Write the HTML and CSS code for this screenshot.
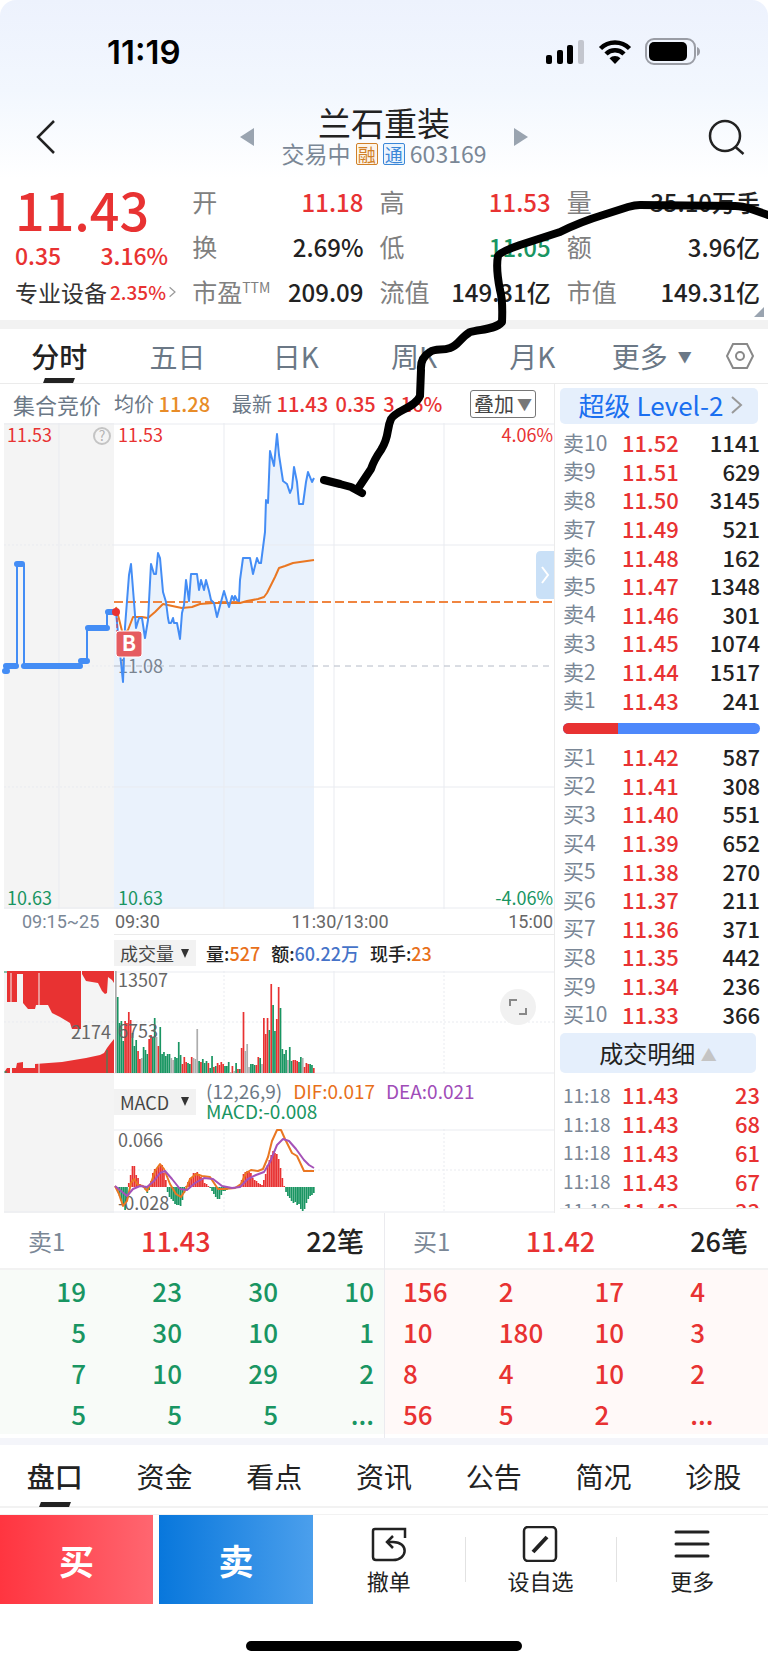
FILE: index.html
```html
<!DOCTYPE html>
<html lang="zh-CN">
<head>
    <meta charset="UTF-8">
    <meta name="viewport" content="width=device-width, initial-scale=1.0">
    <title>兰石重装 603169</title>
    <link rel="stylesheet" href="styles.css">
</head>
<body>
    <header>
        <div class="status-bar">
            <span class="clock">11:19</span>
            <div class="status-icons">
                <svg width="40" height="26" viewBox="0 0 40 26">
                    <rect x="1" y="16" width="6" height="9" rx="2"/>
                    <rect x="12" y="11" width="6" height="14" rx="2"/>
                    <rect x="22" y="6" width="6" height="19" rx="2"/>
                    <rect x="33" y="1" width="6" height="24" rx="2" fill="#c3c6ce"/>
                </svg>
                <svg width="34" height="26" viewBox="0 0 34 26">
                    <path d="M2.500 9.500a20.500 20.500 0 0 1 29 0M8 15a12.700 12.700 0 0 1 18 0" fill="none" stroke="#000" stroke-width="4.500"/>
                    <path d="M17 25l-5.500-5.700a7.800 7.800 0 0 1 11 0z"/>
                </svg>
                <svg width="56" height="28" viewBox="0 0 56 28">
                    <rect x="1" y="1" width="49" height="25" rx="8" fill="none" stroke="#9a9da5" stroke-width="2"/>
                    <rect x="4" y="4" width="38" height="19" rx="5"/>
                    <path d="M52 9c4 1 4 8 0 9z" fill="#9a9da5"/>
                </svg>
            </div>
        </div>
        <nav class="title-bar">
            <button class="icon-button" aria-label="返回">
                <svg width="24" height="36" viewBox="0 0 24 36"><path d="M20 2L4 18l16 16" fill="none" stroke="#222" stroke-width="2.500"/></svg>
            </button>
            <button class="icon-button" aria-label="上一只">
                <svg width="14" height="18" viewBox="0 0 14 18"><path d="M14 0v18L0 9z" fill="#9aa4b0"/></svg>
            </button>
            <div class="stock-title">
                <h1>兰石重装</h1>
                <p>交易中 <span class="badge badge-rong">融</span><span class="badge badge-tong">通</span> 603169</p>
            </div>
            <button class="icon-button" aria-label="下一只">
                <svg width="14" height="18" viewBox="0 0 14 18"><path d="M0 0v18l14-9z" fill="#9aa4b0"/></svg>
            </button>
            <button class="icon-button" aria-label="搜索">
                <svg width="38" height="38" viewBox="0 0 38 38"><g fill="none" stroke="#222" stroke-width="2.500"><circle cx="18" cy="18" r="15"/><path d="M28.500 29l8 7"/></g></svg>
            </button>
        </nav>
    </header>

    <main>
        <section class="quote">
            <div class="quote-main">
                <strong class="price">11.43</strong>
                <div class="change"><span>0.35</span><span>3.16%</span></div>
                <a class="sector" href="#">专业设备<b>2.35%</b>
                    <svg width="12" height="20" viewBox="0 0 12 20"><path d="M1 2l9 8-9 8" fill="none" stroke="#999" stroke-width="2"/></svg>
                </a>
            </div>
            <dl class="quote-col">
                <div><dt>开</dt><dd class="up">11.18</dd></div>
                <div><dt>换</dt><dd>2.69%</dd></div>
                <div><dt>市盈<sup>TTM</sup></dt><dd>209.09</dd></div>
            </dl>
            <dl class="quote-col">
                <div><dt>高</dt><dd class="up">11.53</dd></div>
                <div><dt>低</dt><dd class="down">11.05</dd></div>
                <div><dt>流值</dt><dd>149.31亿</dd></div>
            </dl>
            <dl class="quote-col">
                <div><dt>量</dt><dd>35.10万手</dd></div>
                <div><dt>额</dt><dd>3.96亿</dd></div>
                <div><dt>市值</dt><dd>149.31亿</dd></div>
            </dl>
        </section>

        <nav class="period-tabs">
            <a href="#" class="active">分时</a>
            <a href="#">五日</a>
            <a href="#">日K</a>
            <a href="#">周K</a>
            <a href="#">月K</a>
            <button>更多 <span class="caret">▼</span></button>
            <button aria-label="设置">
                <svg width="30" height="28" viewBox="0 0 30 28"><g fill="none" stroke="#888" stroke-width="2"><path d="M8 2h14l6 12-6 12H8L2 14z"/><circle cx="15" cy="14" r="4"/></g></svg>
            </button>
        </nav>

        <div class="trade">
            <section class="charts">
                <div class="chart-info">
                    <span class="auction">集合竞价</span>
                    <span>均价 <b class="avg">11.28</b></span>
                    <span class="latest">最新 <b class="up">11.43</b> <b class="up">0.35</b> <b class="up">3.16%</b></span>
                    <button class="overlay-button">叠加<span>▼</span></button>
                </div>

                <svg class="chart" viewBox="0 0 554 486">
                    <rect x="4" y="0" width="110" height="486" fill="#f4f4f4"/>
                    <path class="area" id="priceArea"/>
                    <path class="grid" d="M4 1h550M59 0v486M224 0v486M334 0v486M444 0v486M114 122h440M114 364h440M4 485h550"/>
                    <path class="grid dotted" d="M4 122h110M4 364h110M4 243h110"/>
                    <path d="M114 243h440" stroke="#b4bac6" stroke-dasharray="6 5"/>
                    <path d="M114 179h440" stroke="#f08540" stroke-width="2" stroke-dasharray="9 4"/>
                    <text class="axis muted" x="118" y="250">11.08</text>
                    <path class="auction-line" d="M17 243V141M24 141v102M81 243v-5M87 238v-33M107 205v-16"/>
                    <path class="auction-step" d="M5 248h2M6 243h10M17 141h5M24 243h56M81 238h6M88 205h19M108 189h6"/>
                    <path class="line orange" id="avgLine"/>
                    <path class="line blue" id="priceLine"/>
                    <path d="M117 189v22" stroke="#e83232" stroke-dasharray="4 2"/>
                    <circle cx="116" cy="189" r="4" fill="#e83232"/>
                    <rect x="116" y="208" width="26" height="26" rx="3" fill="#e55c61" stroke="#fff"/>
                    <text class="buy-mark" x="129" y="228">B</text>
                    <circle cx="102" cy="13" r="8" fill="none" stroke="#c4c4c4" stroke-width="2"/>
                    <text class="help" x="102" y="18">?</text>
                    <text class="axis up" x="7" y="19">11.53</text>
                    <text class="axis up" x="118" y="19">11.53</text>
                    <text class="axis up end" x="553" y="19">4.06%</text>
                    <text class="axis down" x="7" y="482">10.63</text>
                    <text class="axis down" x="118" y="482">10.63</text>
                    <text class="axis down end" x="553" y="482">-4.06%</text>
                    <path d="M554 128h-13q-5 0-5 5v38q0 5 5 5h13z" fill="#c9e0f7"/>
                    <path d="M542 144l6 8-6 8" fill="none" stroke="#fff" stroke-width="2"/>
                </svg>
                <div class="time-axis">
                    <span class="pre-open">09:15~25</span>
                    <span>09:30</span>
                    <span class="mid">11:30/13:00</span>
                    <span>15:00</span>
                </div>

                <div class="indicator volume-head">
                    <select aria-label="指标一"><option>成交量</option></select>
                    <p><b>量:<span class="orange-text">527</span></b><b>额:<span class="blue-text">60.22万</span></b><b>现手:<span class="orange-text">23</span></b></p>
                </div>
                <svg class="chart" viewBox="0 0 554 103">
                    <rect x="4" y="0" width="110" height="103" fill="#f4f4f4"/>
                    <path class="grid" d="M4 1h550M4 102h550M334 0v102"/>
                    <path class="grid dotted" d="M4 51h550M224 0v102M444 0v102"/>
                    <path d="M7 0v31h10V3h6v29l5 6h7l1-4h12l4 8 8 4 10 6 2 6h9V0zM82 0v3l4 7 12 2 4 8 3 3 2-1 1-16 4 3 2 3V0z" fill="#e83232"/>
                    <path d="M5 102v-2l2-3h3v5zM12 102v-5h4l1-5 6-1v6h12v-4l27-2 24-4 14-3 4-2 3-5 3-4 4-5v34z" fill="#e83232"/>
                    <path d="M11 2v100M39 2v100" stroke="#f4f4f4"/>
                    <path d="M4 1h3M4 101h3M107 79v23" stroke="#199562"/>
                    <g id="volumeBars"></g>
                    <text class="axis gray" x="118" y="16">13507</text>
                    <text class="axis gray" x="118" y="67">6753</text>
                    <text class="axis gray end" x="111" y="68">2174</text>
                    <circle cx="518" cy="36" r="18" fill="#f1f1f1"/>
                    <path d="M510 35v-6h7M526 37v6h-7" fill="none" stroke="#888" stroke-width="2"/>
                </svg>

                <div class="indicator macd-head">
                    <select aria-label="指标二"><option>MACD</option></select>
                    <p><span class="slate">(12,26,9)</span><span class="orange-text">DIF:0.017</span><span class="purple-text">DEA:0.021</span><span class="down">MACD:-0.008</span></p>
                </div>
                <svg class="chart" viewBox="0 0 554 84">
                    <rect x="4" y="0" width="110" height="84" fill="#f4f4f4"/>
                    <path class="grid" d="M114 1h440M4 83h550M334 0v84"/>
                    <path class="grid dotted" d="M114 41h440M224 0v84M444 0v84"/>
                    <g id="macdBars"></g>
                    <text class="axis gray" x="118" y="18">0.066</text>
                    <text class="axis gray" x="118" y="81">-0.028</text>
                    <path class="line orange" id="difLine"/>
                    <path class="line purple" id="deaLine"/>
                </svg>
            </section>

            <aside class="book">
                <a class="level2" href="#">超级 Level-2
                    <svg width="12" height="20" viewBox="0 0 12 20"><path d="M1 2l9 8-9 8" fill="none" stroke="#999" stroke-width="2"/></svg>
                </a>
                <table class="depth">
                    <tr><th>卖10</th><td>11.52</td><td>1141</td></tr>
                    <tr><th>卖9</th><td>11.51</td><td>629</td></tr>
                    <tr><th>卖8</th><td>11.50</td><td>3145</td></tr>
                    <tr><th>卖7</th><td>11.49</td><td>521</td></tr>
                    <tr><th>卖6</th><td>11.48</td><td>162</td></tr>
                    <tr><th>卖5</th><td>11.47</td><td>1348</td></tr>
                    <tr><th>卖4</th><td>11.46</td><td>301</td></tr>
                    <tr><th>卖3</th><td>11.45</td><td>1074</td></tr>
                    <tr><th>卖2</th><td>11.44</td><td>1517</td></tr>
                    <tr><th>卖1</th><td>11.43</td><td>241</td></tr>
                </table>
                <div class="ratio"><div class="ratio-buy" style="width: 28%"></div></div>
                <table class="depth">
                    <tr><th>买1</th><td>11.42</td><td>587</td></tr>
                    <tr><th>买2</th><td>11.41</td><td>308</td></tr>
                    <tr><th>买3</th><td>11.40</td><td>551</td></tr>
                    <tr><th>买4</th><td>11.39</td><td>652</td></tr>
                    <tr><th>买5</th><td>11.38</td><td>270</td></tr>
                    <tr><th>买6</th><td>11.37</td><td>211</td></tr>
                    <tr><th>买7</th><td>11.36</td><td>371</td></tr>
                    <tr><th>买8</th><td>11.35</td><td>442</td></tr>
                    <tr><th>买9</th><td>11.34</td><td>236</td></tr>
                    <tr><th>买10</th><td>11.33</td><td>366</td></tr>
                </table>
                <button class="detail-button">成交明细 <span>▲</span></button>
                <div class="ticks">
                    <table class="depth">
                        <tr><th>11:18</th><td>11.43</td><td>23</td></tr>
                        <tr><th>11:18</th><td>11.43</td><td>68</td></tr>
                        <tr><th>11:18</th><td>11.43</td><td>61</td></tr>
                        <tr><th>11:18</th><td>11.43</td><td>67</td></tr>
                        <tr><th>11:18</th><td>11.43</td><td>33</td></tr>
                    </table>
                </div>
            </aside>
        </div>

        <section class="queues">
            <div class="queue sell">
                <div class="queue-head"><span>卖1</span><b class="up">11.43</b><b>22笔</b></div>
                <table>
                    <tr><td>19</td><td>23</td><td>30</td><td>10</td></tr>
                    <tr><td>5</td><td>30</td><td>10</td><td>1</td></tr>
                    <tr><td>7</td><td>10</td><td>29</td><td>2</td></tr>
                    <tr><td>5</td><td>5</td><td>5</td><td>...</td></tr>
                </table>
            </div>
            <div class="queue buy">
                <div class="queue-head"><span>买1</span><b class="up">11.42</b><b>26笔</b></div>
                <table>
                    <tr><td>156</td><td>2</td><td>17</td><td>4</td></tr>
                    <tr><td>10</td><td>180</td><td>10</td><td>3</td></tr>
                    <tr><td>8</td><td>4</td><td>10</td><td>2</td></tr>
                    <tr><td>56</td><td>5</td><td>2</td><td>...</td></tr>
                </table>
            </div>
        </section>

        <nav class="info-tabs">
            <a href="#" class="active">盘口</a>
            <a href="#">资金</a>
            <a href="#">看点</a>
            <a href="#">资讯</a>
            <a href="#">公告</a>
            <a href="#">简况</a>
            <a href="#">诊股</a>
        </nav>
    </main>

    <footer>
        <div class="actions">
            <button class="buy-button">买</button>
            <button class="sell-button">卖</button>
            <div class="tools">
                <button>
                    <svg width="36" height="36" viewBox="0 0 36 36"><g fill="none" stroke="#222" stroke-width="2.500"><path d="M34 12V3H4q-2 0-2 2v26q0 3 3 3h17c15 0 16-18 0-18h-6"/><path d="M22 10l-6 6 6 6"/></g></svg>
                    <span>撤单</span>
                </button>
                <button>
                    <svg width="36" height="36" viewBox="0 0 36 36"><g fill="none" stroke="#222" stroke-width="2.500"><rect x="2" y="1" width="32" height="34" rx="4"/><path d="M11 26l14-15" stroke-width="4"/></g></svg>
                    <span>设自选</span>
                </button>
                <button>
                    <svg width="36" height="36" viewBox="0 0 36 36"><path d="M2 6h32M2 18h32M2 30h32" stroke="#222" stroke-width="3" stroke-linecap="round"/></svg>
                    <span>更多</span>
                </button>
            </div>
        </div>
        <div class="home-indicator"></div>
    </footer>

    <svg class="doodle" viewBox="0 0 768 520">
        <path d="M768 215L751 209Q742 206 735 206L640 205Q635 205 628 207L603 215Q580 222 560 232L520 245Q500 252 498 256C496 266 498 280 500 290Q503 300 502 322C495 330 480 329 470 332C460 338 458 346 450 348C442 351 436 348 430 352Q420 358 421 370L420 396C415 408 396 410 391 419C386 430 390 436 381 450Q374 460 371 469L359 487"/>
        <path d="M325 480L336 483L351 487L362 493M324 480L340 484"/>
    </svg>

    <script src="script.js"></script>
</body>
</html>
```

FILE: styles.css
```css
* {
    margin: 0;
    padding: 0;
    box-sizing: border-box;
}

body {
    position: relative;
    background: #fff;
    color: #222;
    font-family: 'Noto Sans CJK SC', 'Noto Sans', sans-serif;
    font-size: 24px;
    line-height: 1;
}

button, select {
    background: none;
    border: none;
    color: inherit;
    font: inherit;
    cursor: pointer;
}

a {
    color: inherit;
    text-decoration: none;
}

svg {
    display: block;
}

b, strong {
    font-weight: 500;
}

.up {
    color: #e83232;
    fill: #e83232;
}

.down {
    color: #199562;
    fill: #199562;
}

.slate {
    color: #6b7886;
}

.orange-text {
    color: #e8701a;
}

.blue-text {
    color: #4673c8;
}

.purple-text {
    color: #a04cb8;
}

/* header */
header {
    background: linear-gradient(#edf2fd, #f2f7fe 50%, #fff);
    border-radius: 16px 16px 0 0;
    height: 179px;
}

.status-bar {
    display: flex;
    justify-content: space-between;
    align-items: center;
    height: 104px;
    padding: 0 67px 0 107px;
}

.clock {
    font-family: Inter, sans-serif;
    font-size: 33px;
    font-weight: 600;
    color: #000;
}

.status-icons {
    display: flex;
    align-items: center;
    gap: 13px;
}

.title-bar {
    display: grid;
    grid-template-columns: 60px 1fr 232px 1fr 60px;
    column-gap: 14px;
    align-items: center;
    padding: 0 12px;
    height: 64px;
}

.icon-button {
    display: flex;
    justify-content: center;
}

.icon-button:nth-of-type(2) {
    justify-content: flex-end;
}

.icon-button:nth-of-type(3) {
    justify-content: flex-start;
}

.icon-button:first-child {
    justify-content: flex-start;
    padding-left: 22px;
}

.stock-title {
    padding-bottom: 4px;
    text-align: center;
}

.stock-title h1 {
    font-size: 33px;
    font-weight: 400;
    line-height: 36px;
}

.stock-title p {
    color: #7a8796;
    font-size: 23px;
    line-height: 26px;
    white-space: nowrap;
}

.badge {
    display: inline-block;
    border: 1px solid;
    border-radius: 2px;
    font-size: 18px;
    line-height: 20px;
    width: 22px;
    vertical-align: 1px;
}

.badge-rong {
    color: #d08028;
    background: #fdf5ea;
    margin-right: 5px;
}

.badge-tong {
    color: #3b87d8;
    background: #ebf4fd;
}

/* quote */
.quote {
    position: relative;
    display: grid;
    grid-template-columns: minmax(0, 161fr) 171fr 171fr 193fr;
    gap: 16px;
    padding: 0 8px 0 15px;
    height: 141px;
}

.quote::after {
    content: '';
    position: absolute;
    right: 4px;
    bottom: 3px;
    border: 5px solid transparent;
    border-right-color: #9aa4b0;
    border-bottom-color: #9aa4b0;
}

.quote-main {
    color: #e83232;
    white-space: nowrap;
}

.price {
    display: block;
    font-size: 52px;
    line-height: 60px;
}

.change {
    display: flex;
    justify-content: space-between;
    padding-right: 8px;
    font-size: 23px;
    font-weight: 500;
    line-height: 32px;
}

.sector {
    display: flex;
    align-items: center;
    gap: 3px;
    color: #333;
    font-size: 23px;
    line-height: 42px;
}

.sector b {
    color: #e83232;
    font-size: 19px;
}

.quote-col div {
    display: flex;
    justify-content: space-between;
    line-height: 45px;
    white-space: nowrap;
}

.quote-col dt {
    color: #808080;
    font-size: 25px;
}

.quote-col sup {
    font-size: 14px;
    line-height: 1;
    vertical-align: 9px;
}

.quote-col dd {
    font-weight: 500;
}

/* period tabs */
.period-tabs {
    display: grid;
    grid-template-columns: repeat(5, 118fr) 120fr 56fr;
    border-top: 9px solid #f2f2f2;
    border-bottom: 1px solid #ebebeb;
    color: #6b7886;
    font-size: 28px;
    height: 64px;
    text-align: center;
    line-height: 54px;
}

.period-tabs button {
    display: flex;
    justify-content: center;
    align-items: center;
    gap: 10px;
    white-space: nowrap;
}

.period-tabs .caret {
    font-size: 14px;
}

.period-tabs .active,
.info-tabs .active {
    position: relative;
    color: #222;
    font-weight: 500;
}

.active::after {
    content: '';
    position: absolute;
    left: 50%;
    bottom: 0;
    width: 30px;
    height: 5px;
    margin-left: -15px;
    background: #222;
    transform: skewX(-20deg);
}

/* charts */
.trade {
    display: grid;
    grid-template-columns: 554fr 214fr;
}

.charts {
    min-width: 0;
}

.chart {
    width: 100%;
    height: auto;
    overflow: visible;
}

.chart-info {
    display: flex;
    align-items: center;
    height: 39px;
    padding: 0 18px 0 13px;
    color: #6b7886;
    font-size: 20px;
    white-space: nowrap;
}

.auction {
    font-size: 22px;
    margin-right: 13px;
}

.avg {
    color: #e88c28;
}

.latest {
    margin-left: 22px;
}

.latest b + b {
    margin-left: 3px;
}

.overlay-button {
    display: flex;
    align-items: center;
    gap: 3px;
    height: 28px;
    margin-left: auto;
    padding: 0 3px;
    border: 1px solid #777;
    border-radius: 3px;
    color: #444;
}

.overlay-button span {
    color: #777;
    font-size: 15px;
}

.grid {
    fill: none;
    stroke: #e9ebf0;
}

.dotted {
    stroke-dasharray: 2 2;
}

.area {
    fill: #eaf2fc;
}

.line {
    fill: none;
    stroke-width: 2;
    stroke-linejoin: round;
}

.blue {
    stroke: #448df5;
}

.orange {
    stroke: #ea7722;
}

.purple {
    stroke: #a552b8;
}

.auction-line {
    fill: none;
    stroke: #448df5;
    stroke-width: 2;
}

.auction-step {
    fill: none;
    stroke: #448df5;
    stroke-width: 6;
    stroke-linecap: round;
}

.axis {
    font-size: 18px;
}

.end {
    text-anchor: end;
}

.muted {
    fill: #7a8490;
}

.gray {
    fill: #666;
}

.buy-mark {
    fill: #fff;
    font-size: 21px;
    font-weight: 700;
    text-anchor: middle;
}

.help {
    fill: #b4b4b4;
    font-size: 14px;
    text-anchor: middle;
}

.time-axis {
    display: grid;
    grid-template-columns: 115fr 125fr 200fr 113fr 1fr;
    align-items: center;
    height: 25px;
    color: #666;
    font-family: Roboto, sans-serif;
    font-size: 18px;
}

.time-axis .pre-open {
    padding-left: 22px;
    color: #7a8796;
}

.time-axis .mid {
    text-align: center;
}

.time-axis span:last-child {
    text-align: right;
}

.indicator {
    display: flex;
    align-items: center;
    margin-left: 114px;
    gap: 10px;
    font-size: 18px;
    white-space: nowrap;
}

.indicator select {
    appearance: none;
    flex: none;
    width: 82px;
    height: 26px;
    padding: 0 6px;
    background: #f2f2f2 url("data:image/svg+xml,%3Csvg xmlns='http://www.w3.org/2000/svg' width='8' height='9'%3E%3Cpath d='M0 0h8L4 9z' fill='%23333'/%3E%3C/svg%3E") no-repeat right 7px center;
    color: #444;
    font-size: 18px;
    line-height: 26px;
}

.indicator p {
    display: flex;
    flex-wrap: wrap;
    column-gap: 11px;
    font-weight: 500;
    line-height: 20px;
}

.volume-head {
    height: 37px;
    border-top: 1px solid #ebebeb;
}

.macd-head {
    position: relative;
    height: 55px;
}

.macd-head::before {
    content: '';
    position: absolute;
    left: -110px;
    top: 0;
    bottom: 0;
    width: 110px;
    background: #f4f4f4;
}

.macd-head p {
    padding-bottom: 2px;
    font-size: 19px;
    font-weight: 400;
}

/* order book */
.book {
    display: flex;
    flex-direction: column;
    border-left: 1px solid #ebebeb;
    padding: 4px 8px 0 5px;
}

.level2 {
    display: flex;
    justify-content: center;
    align-items: center;
    gap: 8px;
    height: 36px;
    padding: 0 0 3px 4px;
    margin-right: 2px;
    background: #e5effc;
    border-radius: 5px;
    color: #1a6ff0;
    font-size: 26px;
    white-space: nowrap;
}

.depth {
    width: calc(100% - 3px);
    height: 286px;
    margin: 4px 0 0 3px;
    border-collapse: collapse;
    table-layout: fixed;
    font-size: 22px;
    font-weight: 500;
}

.depth th {
    width: 59px;
    color: #7a8796;
    font-size: 21px;
    font-weight: 400;
    text-align: left;
}

.depth td {
    color: #e83232;
}

.depth td:last-child {
    color: #222;
    text-align: right;
}

.ratio {
    height: 11px;
    margin: 9px 0 4px 3px;
    border-radius: 6px;
    background: #4d88fb;
    overflow: hidden;
}

.ratio-buy {
    height: 100%;
    background: #e83232;
}

.detail-button {
    height: 40px;
    margin: 5px 4px 0 0;
    background: #e5effc;
    border-radius: 5px;
    font-size: 24px;
}

.detail-button span {
    color: #c4c4c4;
    font-size: 16px;
    vertical-align: 2px;
}

.ticks {
    height: 136px;
    border-bottom: 1px solid #ebebeb;
    overflow: hidden;
}

.ticks .depth {
    height: 144px;
    margin-top: 7px;
}

.ticks th {
    font-size: 19px;
}

.ticks td:last-child {
    color: #e83232;
}

/* queues */
.queues {
    display: grid;
    grid-template-columns: 1fr 1fr;
    border-bottom: 7px solid #f4f5fa;
}

.queue {
    padding-bottom: 4px;
}

.queue.buy {
    border-left: 1px solid #ebebef;
}

.queue-head {
    display: grid;
    grid-template-columns: 113fr 120fr 103fr;
    align-items: center;
    height: 57px;
    padding: 0 20px 0 28px;
    border-bottom: 2px solid #f2f2f2;
    font-size: 27px;
}

.queue-head span {
    color: #7a8796;
    font-size: 24px;
}

.queue-head b:last-child {
    text-align: right;
}

.queue table {
    width: 100%;
    border-collapse: collapse;
    table-layout: fixed;
    font-size: 26px;
    font-weight: 500;
    line-height: 41px;
}

.sell table {
    background: #f8fbf8;
    color: #199562;
    text-align: right;
}

.sell td {
    padding-right: 10px;
}

.buy table {
    background: #fff9f8;
    color: #e83232;
}

.buy td {
    padding-left: 18px;
}

/* info tabs */
.info-tabs {
    display: grid;
    grid-template-columns: repeat(7, 1fr);
    height: 63px;
    border-bottom: 2px solid #f2f2f2;
    font-size: 28px;
    line-height: 62px;
    text-align: center;
}

/* footer */
.actions {
    display: grid;
    grid-template-columns: 159fr 154fr 455fr;
    height: 90px;
    margin-top: 6px;
    border-top: 1px solid #f2f2f2;
}

.buy-button,
.sell-button {
    color: #fff;
    font-size: 35px;
    font-weight: 700;
}

.buy-button {
    margin-right: 6px;
    background: linear-gradient(90deg, #ff3540, #ff6670);
}

.sell-button {
    background: linear-gradient(90deg, #0877dc, #4b9fec);
}

.tools {
    display: grid;
    grid-template-columns: repeat(3, 1fr);
}

.tools button {
    position: relative;
    display: flex;
    flex-direction: column;
    align-items: center;
    justify-content: center;
    gap: 7px;
    padding-bottom: 2px;
    font-size: 22px;
}

.tools button + button::before {
    content: '';
    position: absolute;
    left: 0;
    top: 22px;
    bottom: 22px;
    width: 1px;
    background: #e2e2e2;
}

.home-indicator {
    width: 36%;
    height: 10px;
    margin: 37px auto 14px;
    border-radius: 5px;
    background: #000;
}

/* hand-drawn arrow */
.doodle {
    position: absolute;
    left: 0;
    top: 0;
    width: 100%;
    fill: none;
    stroke: #000;
    stroke-width: 8;
    stroke-linecap: round;
    stroke-linejoin: round;
    pointer-events: none;
}
```

FILE: script.js
```js
const RED = '#e83232';
const GREEN = '#199562';
const GRAY = '#adadad';
const START_X = 115;
const BAR_STEP = 1.85;

const price = '116,189 120,230 123,259 125,204 129,152 131,141 134,179 136,205 139,195 142,195 145,215 148,197 151,141 154,151 156,151 158,130 160,135 163,169 166,179 168,195 169,200 171,200 173,195 174,200 177,200 180,216 182,190 184,182 186,157 189,178 191,151 197,151 199,167 201,157 204,167 206,157 209,168 211,177 214,180 217,194 221,179 224,168 227,178 229,184 232,173 234,177 235,173 237,177 239,178 240,157 243,135 250,135 253,151 257,135 259,140 261,140 265,109 266,77 268,80 270,28 274,43 277,11 279,32 283,58 287,61 290,70 292,65 294,44 297,59 299,81 303,81 306,59 308,49 312,59 314,55';
const average = '116,184 123,212 128,207 133,194 142,194 148,195 155,189 163,181 177,184 182,185 192,184 200,181 213,180 227,180 240,180 247,178 258,176 264,174 267,170 272,160 275,154 279,145 285,143 293,140 314,137';
const dif = '115,57 119,65 123,77 127,72 131,54 134,50 138,56 143,57 147,62 151,54 155,42 160,35 164,40 170,55 176,65 181,68 186,60 190,50 196,45 202,47 210,48 218,60 224,60 235,59 241,55 246,44 251,41 258,42 263,40 268,28 272,12 277,1 281,1 285,10 292,24 297,27 304,42 308,42 314,42';
const dea = '115,57 121,62 127,67 133,60 140,57 147,58 154,52 160,44 165,42 172,50 180,60 187,61 195,54 204,49 213,50 222,57 232,59 240,58 248,50 256,46 264,43 270,33 277,16 283,10 289,12 296,20 304,31 309,36 314,39';

// r = up, g = down, x = flat
const volume = 'x102 g76 g50 g52 g32 r52 r50 r61 r53 g40 g27 g33 r22 r14 x15 g26 g23 g19 r34 r38 g36 g55 x36 r27 g46 g19 g21 g17 g19 g19 x15 x13 g16 g15 g31 g18 r9 r16 r11 g10 g9 r16 x15 x14 x44 g12 r11 g14 g10 g12 r10 g5 g17 r6 g7 r10 r8 r11 r9 g7 g7 g11 x1 r7 x2 g10 r4 g4 r25 r61 x22 x29 x6 g9 g9 g8 r8 r16 g15 x9 r55 r39 r55 g43 r89 g68 g42 r54 r86 g65 g24 g19 g23 x13 g26 g12 r13 r13 r12 g11 g16 x15 r6 r10 r9 g9 g8 r5';
const macd = [-1, -4, -9, -14, -17, -23, -14, 4, 12, 21, 21, 12, 9, 3, 1, 0, -3, -6, -3, 6, 14, 18, 18, 20, 21, 22, 14, 7, -5, -10, -12, -14, -17, -18, -18, -19, -13, -6, 1, 5, 9, 10, 14, 14, 15, 13, 10, 9, 4, 3, 1, 0, -4, -7, -10, -12, -12, -8, -4, -4, -3, -2, -2, -1, -1, 0, 0, 2, 7, 13, 15, 16, 15, 14, 9, 7, 6, 4, 3, 2, 7, 13, 22, 27, 32, 36, 34, 33, 28, 19, 9, 1, -5, -9, -11, -14, -16, -15, -18, -17, -22, -24, -22, -16, -12, -9, -8, -6];

function linePath(points) {
    return 'M' + points.split(' ').join('L');
}

function addBar(group, index, y, height, color) {
    const bar = document.createElementNS('http://www.w3.org/2000/svg', 'rect');
    bar.setAttribute('x', START_X + index * BAR_STEP);
    bar.setAttribute('y', y);
    bar.setAttribute('width', 1.7);
    bar.setAttribute('height', height);
    bar.setAttribute('fill', color);
    group.appendChild(bar);
}

document.getElementById('priceLine').setAttribute('d', linePath(price));
document.getElementById('priceArea').setAttribute('d', linePath(price) + 'V486H114V189Z');
document.getElementById('avgLine').setAttribute('d', linePath(average));
document.getElementById('difLine').setAttribute('d', linePath(dif));
document.getElementById('deaLine').setAttribute('d', linePath(dea));

const volumeBars = document.getElementById('volumeBars');
volume.split(' ').forEach(function(item, i) {
    const height = Number(item.slice(1));
    const color = { r: RED, g: GREEN, x: GRAY }[item[0]];
    addBar(volumeBars, i, 102 - height, height, color);
});

const macdBars = document.getElementById('macdBars');
macd.forEach(function(value, i) {
    addBar(macdBars, i, value > 0 ? 58 - value : 58, Math.abs(value) || 1, value > 0 ? RED : GREEN);
});
```
